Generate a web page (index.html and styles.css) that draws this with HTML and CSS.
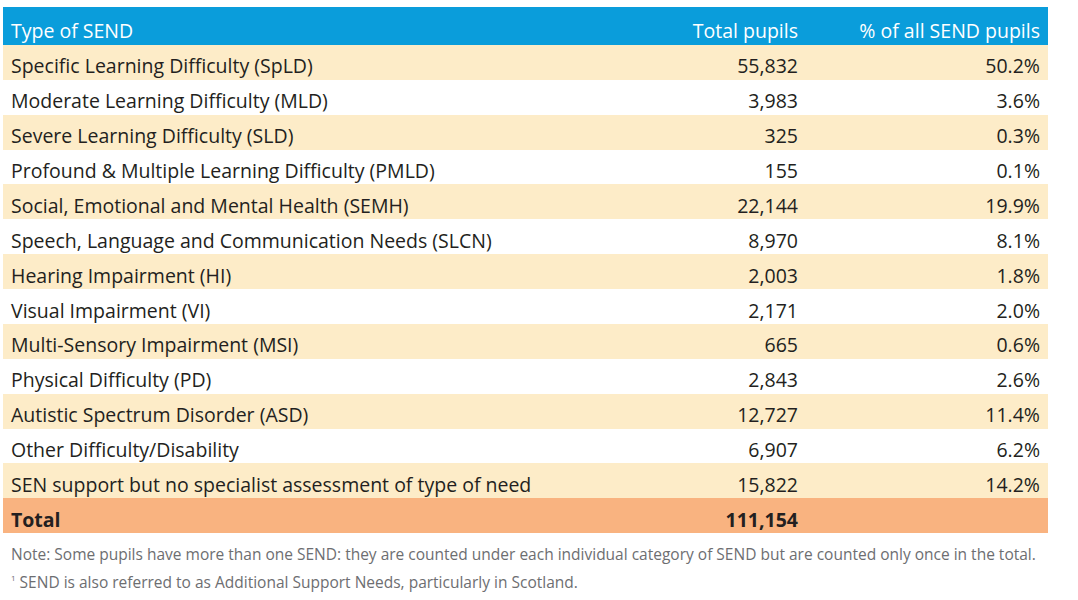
FILE: index.html
```html
<!DOCTYPE html>
<html lang="en">
<head>
<meta charset="utf-8">
<title>Type of SEND</title>
<link rel="stylesheet" href="styles.css">
</head>
<body>
<div class="page">
  <table class="send-table">
    <colgroup>
      <col class="c-type">
      <col class="c-total">
      <col class="c-pct">
    </colgroup>
    <thead>
      <tr class="head">
        <th class="left">Type of SEND</th>
        <th class="num">Total pupils</th>
        <th class="num">% of all SEND pupils</th>
      </tr>
    </thead>
    <tbody>
      <tr class="cream"><td>Specific Learning Difficulty (SpLD)</td><td class="num">55,832</td><td class="num">50.2%</td></tr>
      <tr><td>Moderate Learning Difficulty (MLD)</td><td class="num">3,983</td><td class="num">3.6%</td></tr>
      <tr class="cream"><td>Severe Learning Difficulty (SLD)</td><td class="num">325</td><td class="num">0.3%</td></tr>
      <tr><td>Profound &amp; Multiple Learning Difficulty (PMLD)</td><td class="num">155</td><td class="num">0.1%</td></tr>
      <tr class="cream"><td>Social, Emotional and Mental Health (SEMH)</td><td class="num">22,144</td><td class="num">19.9%</td></tr>
      <tr><td>Speech, Language and Communication Needs (SLCN)</td><td class="num">8,970</td><td class="num">8.1%</td></tr>
      <tr class="cream"><td>Hearing Impairment (HI)</td><td class="num">2,003</td><td class="num">1.8%</td></tr>
      <tr><td>Visual Impairment (VI)</td><td class="num">2,171</td><td class="num">2.0%</td></tr>
      <tr class="cream"><td>Multi-Sensory Impairment (MSI)</td><td class="num">665</td><td class="num">0.6%</td></tr>
      <tr><td>Physical Difficulty (PD)</td><td class="num">2,843</td><td class="num">2.6%</td></tr>
      <tr class="cream"><td>Autistic Spectrum Disorder (ASD)</td><td class="num">12,727</td><td class="num">11.4%</td></tr>
      <tr><td>Other Difficulty/Disability</td><td class="num">6,907</td><td class="num">6.2%</td></tr>
      <tr class="cream"><td>SEN support but no specialist assessment of type of need</td><td class="num">15,822</td><td class="num">14.2%</td></tr>
      <tr class="total"><td>Total</td><td class="num">111,154</td><td class="num"></td></tr>
    </tbody>
  </table>
  <div class="notes">
    <p>Note: Some pupils have more than one SEND: they are counted under each individual category of SEND but are counted only once in the total.</p>
    <p><sup>1</sup> SEND is also referred to as Additional Support Needs, particularly in Scotland.</p>
  </div>
</div>
</body>
</html>
```
FILE: styles.css
```css
html, body {
  margin: 0;
  padding: 0;
  background: #ffffff;
}
.page {
  padding: 7.3px 0 0 3px;
  width: 1045px;
  font-family: "Open Sans", "Noto Sans", sans-serif;
  color: #231f20;
}
.send-table {
  width: 1045px;
  border-collapse: collapse;
  table-layout: fixed;
  font-size: 19.5px;
}
.c-type { width: 620px; }
.c-total { width: 183px; }
.c-pct { width: 242px; }
.send-table tr {
  height: 34.88px;
}
.send-table th,
.send-table td {
  padding: 8px 8px 0 8px;
  text-align: left;
  font-weight: normal;
  white-space: nowrap;
  vertical-align: middle;
  line-height: 20px;
}
.send-table .num {
  text-align: right;
}
.send-table .head {
  height: 37.7px;
}
.head th {
  background: #0a9ddb;
  color: #ffffff;
  padding-top: 10px;
}
.cream td {
  background: #fdecc8;
}
.total td {
  background: #f9b380;
  font-weight: bold;
}
.notes {
  padding: 7.8px 0 0 8px;
  color: #6d6e71;
  font-size: 15.5px;
}
.notes p {
  margin: 0;
  line-height: 27.5px;
}
.notes sup {
  font-size: 8px;
  vertical-align: 7px;
  line-height: 0;
}
```
